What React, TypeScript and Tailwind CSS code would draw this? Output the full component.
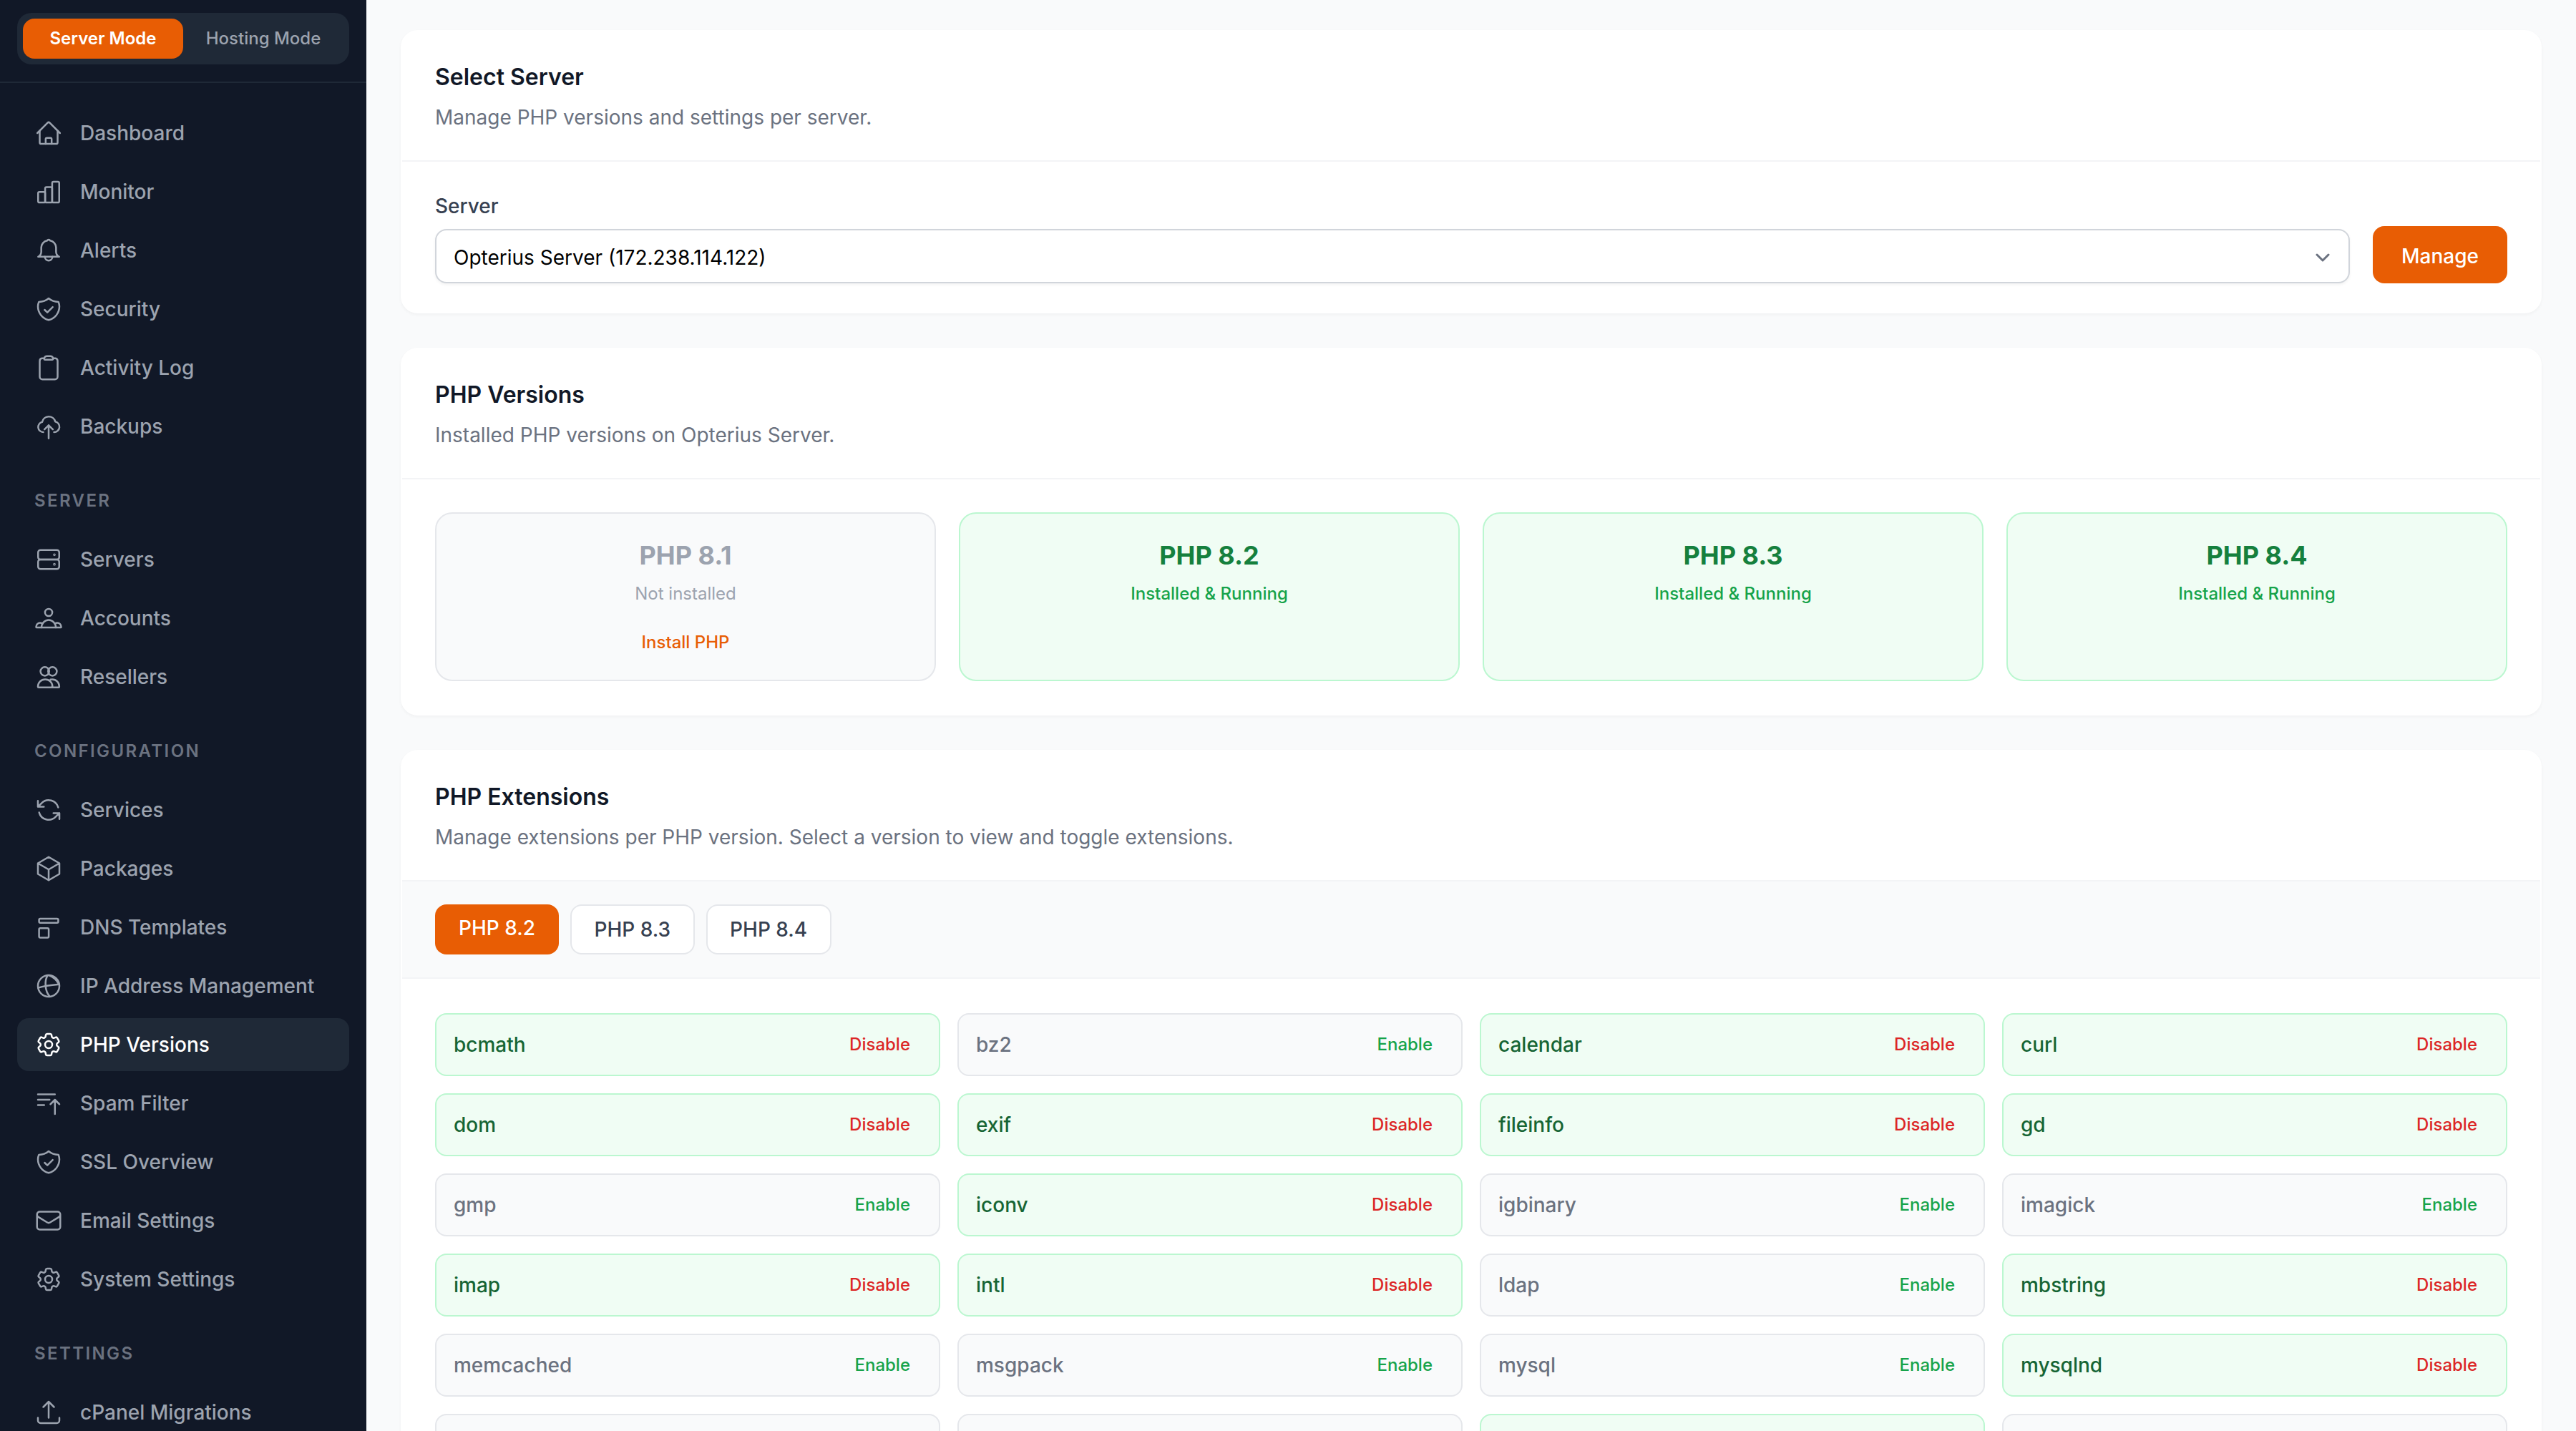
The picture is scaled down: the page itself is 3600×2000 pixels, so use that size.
import type { ComponentType, ReactNode } from "react";
import {
  HiOutlineArrowPath,
  HiOutlineClipboard,
  HiOutlineCube,
  HiOutlineCog6Tooth,
  HiOutlineBarsArrowUp,
  HiOutlineEnvelope,
  HiOutlineArrowUpTray,
} from "react-icons/hi2";

type IconProps = { className?: string };
type IconType = ComponentType<IconProps>;

const Outline = ({ className, children }: IconProps & { children: ReactNode }) => (
  <svg
    className={className}
    viewBox="0 0 24 24"
    fill="none"
    stroke="currentColor"
    strokeWidth={1.5}
    strokeLinecap="round"
    strokeLinejoin="round"
  >
    {children}
  </svg>
);

const HomeIcon = (p: IconProps) => (
  <Outline {...p}>
    <path d="M2.5 12l8.6-8.6c.5-.5 1.3-.5 1.8 0L21.5 12" />
    <path d="M4.5 10v9.9c0 .6.5 1.1 1.1 1.1h12.8c.6 0 1.1-.5 1.1-1.1V10" />
    <path d="M9.5 21v-4c0-.6.5-1 1-1h3c.5 0 1 .4 1 1v4" />
  </Outline>
);

const BarsIcon = (p: IconProps) => (
  <Outline {...p}>
    <rect x="3.15" y="12.15" width="5.9" height="8.85" rx="1.1" />
    <rect x="9.05" y="8.15" width="5.9" height="12.85" rx="1.1" />
    <rect x="14.95" y="3.55" width="5.9" height="17.45" rx="1.1" />
  </Outline>
);

const BellIcon = (p: IconProps) => (
  <Outline {...p}>
    <path d="M12 3a1.5 1.5 0 0 1 1.3.8 6 6 0 0 1 4.9 5.7V13c0 1.8.8 3.3 2.6 4.3H3.2C5 16.3 5.8 14.8 5.8 13V9.5a6 6 0 0 1 4.9-5.7A1.5 1.5 0 0 1 12 3z" />
    <path d="M8.8 17.3a3.2 3.2 0 0 0 6.4 0" />
  </Outline>
);

const ShieldIcon = (p: IconProps) => (
  <Outline {...p}>
    <path d="M12 3c2.2 1.9 5 2.9 8.2 3 .5 1.1.8 2.4.8 3.8 0 5.5-3.8 10.1-9 11.4-5.2-1.3-9-5.9-9-11.4 0-1.4.3-2.7.8-3.8 3.2-.1 6-1.1 8.2-3z" />
    <path d="M8.6 12.6l2.3 2.2 4.5-4.5" />
  </Outline>
);

const CloudIcon = (p: IconProps) => (
  <Outline {...p}>
    <path d="M7.5 16.8a4.3 4.3 0 0 1-.9-8.5 5.6 5.6 0 0 1 10.9-.4 4.5 4.5 0 0 1-1 8.9" />
    <path d="M12 22V11m-3.5 3.5L12 11l3.5 3.5" />
  </Outline>
);

const ServerIcon = (p: IconProps) => (
  <Outline {...p}>
    <rect x="3.15" y="4" width="17.7" height="8" rx="2" />
    <rect x="3.15" y="12" width="17.7" height="8" rx="2" />
    <circle cx="16.8" cy="8" r="0.35" />
    <circle cx="16.8" cy="16" r="0.35" />
  </Outline>
);

const AccountsIcon = (p: IconProps) => (
  <Outline {...p}>
    <circle cx="12" cy="7.2" r="3.05" />
    <path d="M6 19.85a6 6.4 0 0 1 12 0" />
    <path d="M6.6 16.4c-.5-.3-1.1-.5-1.8-.5a3.3 3.3 0 0 0-3.3 3.3v.1c0 .3.2.55.55.55h19.9c.35 0 .55-.25.55-.55v-.1a3.3 3.3 0 0 0-3.3-3.3c-.7 0-1.3.2-1.8.5" />
  </Outline>
);

const ResellersIcon = (p: IconProps) => (
  <Outline {...p}>
    <circle cx="8.8" cy="7.4" r="3.65" />
    <circle cx="15.2" cy="7.4" r="3.65" />
    <path d="M3 20.1a6.1 6 0 0 1 12.2 0c0 .4-.3.75-.75.75H3.75A.75.75 0 0 1 3 20.1z" />
    <path d="M13.5 14.3c.5-.1 1-.2 1.5-.2a5.9 6 0 0 1 5.9 6c0 .4-.3.75-.75.75H14.5" />
  </Outline>
);

const ServicesIcon = ({ className }: IconProps) => <HiOutlineArrowPath className={`${className} -scale-x-100`} />;

const DnsIcon = (p: IconProps) => (
  <Outline {...p}>
    <rect x="3.95" y="4.75" width="16.1" height="3.5" rx="1" />
    <rect x="3.95" y="12.75" width="8.1" height="7.9" rx="1" />
  </Outline>
);

const GlobeIcon = (p: IconProps) => (
  <Outline {...p}>
    <circle cx="12" cy="12" r="9" />
    <path d="M3.2 13.6c5.5-1.8 12-2.4 17.6-2.9" />
    <path d="M11.2 3.1C8.6 7 8.4 16 13 20.9" />
    <path d="M12.2 3c3.4 1.2 6.6 4.1 8.4 7.6" />
  </Outline>
);

const NavItem = ({ icon: Icon, label, active }: { icon: IconType; label: string; active?: boolean }) => (
  <a
    className={
      active
        ? "flex h-[74px] items-center gap-[24px] rounded-[16px] bg-[#1f2937] px-[24px] text-[28px] font-medium text-white"
        : "flex h-[74px] items-center gap-[24px] rounded-[16px] px-[24px] text-[28px] font-medium text-[#9ca3af]"
    }
  >
    <Icon className="h-[40px] w-[40px] shrink-0" />
    <span>{label}</span>
  </a>
);

const SectionLabel = ({ children }: { children: string }) => (
  <div className="mb-[29px] mt-[51px] px-[24px] text-[24px] font-semibold uppercase leading-[32px] tracking-[2.4px] text-[#6b7280]">
    {children}
  </div>
);

const Sidebar = () => (
  <aside className="flex h-full w-[512px] shrink-0 flex-col overflow-hidden bg-[#111827]">
    <div className="h-[116px] shrink-0 border-b-2 border-[#1f2937] px-[24px] pt-[18px]">
      <div className="flex h-[72px] items-center rounded-[20px] bg-[#1f2937] p-[8px] text-[24px]">
        <div className="flex h-[56px] w-[224px] items-center justify-center rounded-[16px] bg-[#e85d04] font-semibold text-white">
          Server Mode
        </div>
        <div className="flex flex-1 items-center justify-center font-medium text-[#9ca3af]">Hosting Mode</div>
      </div>
    </div>
    <nav className="px-[24px] pt-[33px]">
      <div className="flex flex-col gap-[8px]">
        <NavItem icon={HomeIcon} label="Dashboard" />
        <NavItem icon={BarsIcon} label="Monitor" />
        <NavItem icon={BellIcon} label="Alerts" />
        <NavItem icon={ShieldIcon} label="Security" />
        <NavItem icon={HiOutlineClipboard} label="Activity Log" />
        <NavItem icon={CloudIcon} label="Backups" />
      </div>
      <SectionLabel>Server</SectionLabel>
      <div className="flex flex-col gap-[8px]">
        <NavItem icon={ServerIcon} label="Servers" />
        <NavItem icon={AccountsIcon} label="Accounts" />
        <NavItem icon={ResellersIcon} label="Resellers" />
      </div>
      <SectionLabel>Configuration</SectionLabel>
      <div className="flex flex-col gap-[8px]">
        <NavItem icon={ServicesIcon} label="Services" />
        <NavItem icon={HiOutlineCube} label="Packages" />
        <NavItem icon={DnsIcon} label="DNS Templates" />
        <NavItem icon={GlobeIcon} label="IP Address Management" />
        <NavItem icon={HiOutlineCog6Tooth} label="PHP Versions" active />
        <NavItem icon={HiOutlineBarsArrowUp} label="Spam Filter" />
        <NavItem icon={ShieldIcon} label="SSL Overview" />
        <NavItem icon={HiOutlineEnvelope} label="Email Settings" />
        <NavItem icon={HiOutlineCog6Tooth} label="System Settings" />
      </div>
      <SectionLabel>Settings</SectionLabel>
      <NavItem icon={HiOutlineArrowUpTray} label="cPanel Migrations" />
    </nav>
  </aside>
);

const CardHeader = ({ title, desc }: { title: string; desc: string }) => (
  <div className="border-b-2 border-[#f3f4f6] px-[46px] py-[40px]">
    <h2 className="text-[32px] font-semibold leading-[48px] text-[#111827]">{title}</h2>
    <p className="mt-[12px] text-[28px] leading-[40px] text-[#6b7280]">{desc}</p>
  </div>
);

const Card = ({ children }: { children: ReactNode }) => (
  <section className="shrink-0 overflow-hidden rounded-[24px] border-2 border-white bg-white shadow-[0_2px_4px_rgba(0,0,0,0.04)]">
    {children}
  </section>
);

const versions = ["PHP 8.2", "PHP 8.3", "PHP 8.4"];

const extensions: [string, boolean][] = [
  ["bcmath", true],
  ["bz2", false],
  ["calendar", true],
  ["curl", true],
  ["dom", true],
  ["exif", true],
  ["fileinfo", true],
  ["gd", true],
  ["gmp", false],
  ["iconv", true],
  ["igbinary", false],
  ["imagick", false],
  ["imap", true],
  ["intl", true],
  ["ldap", false],
  ["mbstring", true],
  ["memcached", false],
  ["msgpack", false],
  ["mysql", false],
  ["mysqlnd", true],
  ["", false],
  ["", false],
  ["", true],
  ["", false],
];

const ExtensionRow = ({ name, on }: { name: string; on: boolean }) => (
  <div
    className={
      on
        ? "flex h-[88px] items-center justify-between rounded-[16px] border-2 border-[#bbf7d0] bg-[#f0fdf4] pl-[24px] pr-[40px]"
        : "flex h-[88px] items-center justify-between rounded-[16px] border-2 border-[#e5e7eb] bg-[#f9fafb] pl-[24px] pr-[40px]"
    }
  >
    {name && (
      <>
        <span className={on ? "text-[28px] font-medium text-[#166534]" : "text-[28px] font-medium text-[#6b7280]"}>{name}</span>
        <span className={on ? "text-[24px] font-medium text-[#dc2626]" : "text-[24px] font-medium text-[#16a34a]"}>
          {on ? "Disable" : "Enable"}
        </span>
      </>
    )}
  </div>
);

export default function App() {
  return (
    <div className="flex h-[2000px] w-[3600px] overflow-hidden bg-[#f9fafb] font-['Inter',sans-serif]">
      <Sidebar />
      <main className="flex min-w-0 flex-1 flex-col gap-[48px] px-[48px] pt-[42px]">
        <Card>
          <CardHeader title="Select Server" desc="Manage PHP versions and settings per server." />
          <div className="px-[46px] pb-[40px] pt-[42px]">
            <label className="mb-[8px] block text-[28px] font-medium leading-[40px] text-[#374151]">Server</label>
            <div className="flex items-end gap-[32px]">
              <div className="flex h-[76px] flex-1 items-center justify-between rounded-[16px] border-2 border-[#d1d5db] bg-white pl-[24px] pr-[26px] pt-[4px] text-[28px] text-black shadow-[0_2px_4px_rgba(0,0,0,0.05)]">
                <span>Opterius Server (172.238.114.122)</span>
                <svg className="h-[12px] w-[20px] text-[#6b7280]" viewBox="0 0 20 12" fill="none" stroke="currentColor" strokeWidth={3} strokeLinecap="round" strokeLinejoin="round">
                  <path d="M2 2l8 8 8-8" />
                </svg>
              </div>
              <button className="h-[80px] w-[188px] rounded-[16px] bg-[#e85d04] pt-[4px] text-[28px] font-medium text-white">Manage</button>
            </div>
          </div>
        </Card>

        <Card>
          <CardHeader title="PHP Versions" desc="Installed PHP versions on Opterius Server." />
          <div className="grid grid-cols-4 gap-[32px] px-[46px] py-[46px]">
            <div className="h-[236px] rounded-[24px] border-2 border-[#e5e7eb] bg-[#f9fafb] pt-[30px] text-center">
              <div className="text-[36px] font-bold leading-[56px] text-[#9ca3af]">PHP 8.1</div>
              <div className="mt-[10px] text-[24px] leading-[32px] text-[#9ca3af]">Not installed</div>
              <div className="mt-[36px] text-[24px] font-medium leading-[32px] text-[#e85d04]">Install PHP</div>
            </div>
            {versions.map((v) => (
              <div key={v} className="h-[236px] rounded-[24px] border-2 border-[#bbf7d0] bg-[#f0fdf4] pt-[30px] text-center">
                <div className="text-[36px] font-bold leading-[56px] text-[#15803d]">{v}</div>
                <div className="mt-[10px] text-[24px] font-medium leading-[32px] text-[#16a34a]">Installed &amp; Running</div>
              </div>
            ))}
          </div>
        </Card>

        <Card>
          <CardHeader title="PHP Extensions" desc="Manage extensions per PHP version. Select a version to view and toggle extensions." />
          <div className="flex items-stretch gap-[16px] border-b-2 border-[#f3f4f6] bg-[#f9fafb] px-[46px] py-[32px] text-[28px] font-medium leading-[40px]">
            <a className="rounded-[16px] bg-[#e85d04] px-[33px] pb-[17px] pt-[13px] text-white">PHP 8.2</a>
            <a className="rounded-[16px] border-2 border-[#e5e7eb] bg-white px-[31.5px] py-[13px] text-[#374151]">PHP 8.3</a>
            <a className="rounded-[16px] border-2 border-[#e5e7eb] bg-white px-[31.5px] py-[13px] text-[#374151]">PHP 8.4</a>
          </div>
          <div className="grid grid-cols-4 gap-[24px] px-[46px] pt-[48px]">
            {extensions.map(([name, on], i) => (
              <ExtensionRow key={i} name={name} on={on} />
            ))}
          </div>
        </Card>
      </main>
    </div>
  );
}
